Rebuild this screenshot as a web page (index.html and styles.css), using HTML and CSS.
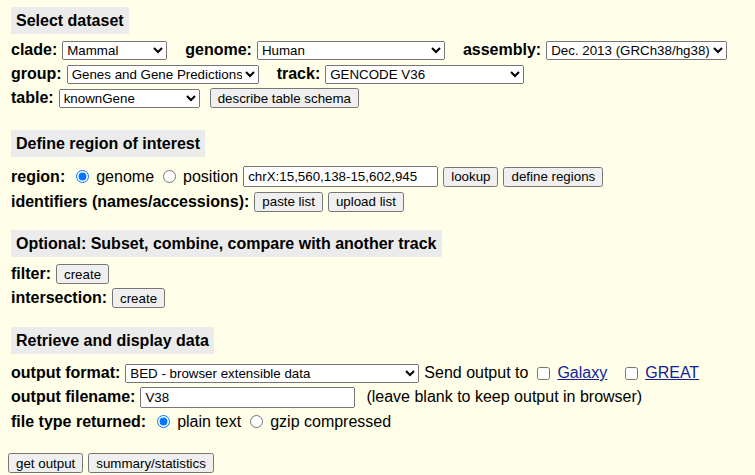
FILE: index.html
```html
<!DOCTYPE html>
<html lang="en">
<head>
<meta charset="utf-8">
<title>Table Browser</title>
<link rel="stylesheet" href="styles.css">
</head>
<body>
<div class="section s1">
  <div class="hdr-wrap"><span class="hdr">Select dataset</span></div>
  <div class="rows r1">
    <div class="row">
      <b class="lbl">clade:</b>
      <select class="sel w-clade"><option>Mammal</option></select>
      <b class="lbl">genome:</b>
      <select class="sel w-genome"><option>Human</option></select>
      <b class="lbl">assembly:</b>
      <select class="sel w-assembly"><option>Dec. 2013 (GRCh38/hg38)</option></select>
    </div>
    <div class="row">
      <b class="lbl">group:</b>
      <select class="sel w-group"><option>Genes and Gene Predictions</option></select>
      <b class="lbl">track:</b>
      <select class="sel w-track"><option>GENCODE V36</option></select>
    </div>
    <div class="row">
      <b class="lbl">table:</b>
      <select class="sel w-table"><option>knownGene</option></select>
      <button class="btn">describe table schema</button>
    </div>
  </div>
</div>

<div class="section s2">
  <div class="hdr-wrap"><span class="hdr">Define region of interest</span></div>
  <div class="rows r2">
    <div class="row tall">
      <b class="lbl">region:</b>
      <input type="radio" name="region" class="radio first" checked>
      <span class="txt">genome</span>
      <input type="radio" name="region" class="radio">
      <span class="txt">position</span>
      <input type="text" class="field w-pos" value="chrX:15,560,138-15,602,945">
      <button class="btn">lookup</button>
      <button class="btn">define regions</button>
    </div>
    <div class="row tall">
      <b class="lbl">identifiers (names/accessions):</b>
      <button class="btn">paste list</button>
      <button class="btn">upload list</button>
    </div>
  </div>
</div>

<div class="section s3">
  <div class="hdr-wrap"><span class="hdr">Optional: Subset, combine, compare with another track</span></div>
  <div class="rows r3">
    <div class="row">
      <b class="lbl">filter:</b>
      <button class="btn">create</button>
    </div>
    <div class="row">
      <b class="lbl">intersection:</b>
      <button class="btn">create</button>
    </div>
  </div>
</div>

<div class="section s4">
  <div class="hdr-wrap"><span class="hdr">Retrieve and display data</span></div>
  <div class="rows r4">
    <div class="row">
      <b class="lbl">output format:</b>
      <select class="sel w-format"><option>BED - browser extensible data</option></select>
      <span class="txt">Send output to</span>
      <input type="checkbox" class="check">
      <a href="#" class="link">Galaxy</a>
      <input type="checkbox" class="check second">
      <a href="#" class="link">GREAT</a>
    </div>
    <div class="row">
      <b class="lbl">output filename:</b>
      <input type="text" class="field w-file" value="V38">
      <span class="txt note">(leave blank to keep output in browser)</span>
    </div>
    <div class="row tall">
      <b class="lbl">file type returned:</b>
      <input type="radio" name="ftype" class="radio first" checked>
      <span class="txt">plain text</span>
      <input type="radio" name="ftype" class="radio">
      <span class="txt">gzip compressed</span>
    </div>
  </div>
</div>

<div class="actions">
  <button class="btn">get output</button>
  <button class="btn">summary/statistics</button>
</div>
</body>
</html>
```

FILE: styles.css
```css
html, body {
  background: #fffee8;
}
body {
  margin: 0;
  padding: 7px 0 0 8px;
  font-family: "Liberation Sans", Arial, sans-serif;
  font-size: 16px;
  color: #000;
}
.section {
  padding-left: 3px;
}
.s2 { margin-top: 20px; }
.s3 { margin-top: 16px; }
.s4 { margin-top: 17px; }

.hdr-wrap {
  display: flex;
}
.hdr {
  display: block;
  background: #ebebeb;
  font-weight: bold;
  height: 27px;
  line-height: 27px;
  padding: 0 5px;
}
.r1 { margin-top: 4px; }
.r2 { margin-top: 7px; }
.r3 { margin-top: 5px; }
.r4 { margin-top: 7px; }

.row {
  display: flex;
  align-items: center;
  height: 24px;
  white-space: nowrap;
}
.row.tall { height: 25px; }

.lbl {
  font-weight: bold;
  margin-right: 5px;
}
.row > select + .lbl { margin-left: 18px; }

select, input, button {
  font-family: "Liberation Sans", Arial, sans-serif;
  font-size: 13.33px;
  color: #000;
}
.sel {
  box-sizing: border-box;
  height: 19px;
  margin: 0;
}
.w-clade { width: 105px; }
.w-genome { width: 188px; }
.w-assembly { width: 181px; }
.w-group { width: 192px; }
.w-track { width: 199px; }
.w-table { width: 141px; margin-right: 10px; }
.w-format { width: 294px; margin-right: 5px; }

.btn {
  box-sizing: border-box;
  height: 20px;
  margin: 0 5px 0 0;
  padding: 0 6px;
}
.field {
  box-sizing: border-box;
  height: 21px;
  margin: 0 5px 0 0;
  padding: 0 3px;
}
.w-pos { width: 195px; }
.w-file { width: 215px; }

.radio {
  width: 13px;
  height: 13px;
  margin: 0 7px 0 9px;
}
.radio.first { margin-left: 6px; }
.txt + .field { margin-left: 5px; }

.check {
  width: 13px;
  height: 13px;
  margin: 0 7px 0 9px;
}
.check.second { margin-left: 18px; }
.link {
  color: #121e9a;
  text-decoration: underline;
}
.note { margin-left: 6px; }

.actions {
  display: flex;
  align-items: center;
  height: 24px;
  margin-top: 17px;
}
```
